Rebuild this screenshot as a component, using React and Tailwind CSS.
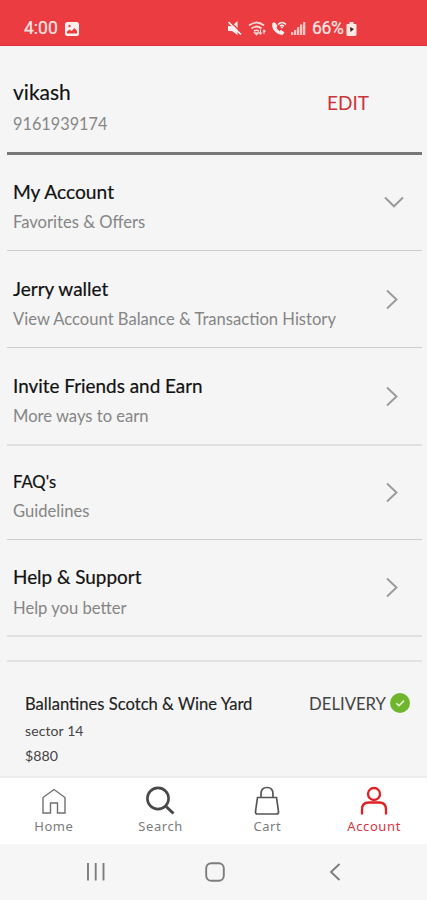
const rows = [
  { title: "My Account", sub: "Favorites & Offers", down: true, box: "h-[96px] pt-[25px] border-b border-[#cccccc]", gap: "mt-[6px]", titleSize: "text-[19.2px]", icon: "mt-[10px] mr-[18px]" },
  { title: "Jerry wallet", sub: "View Account Balance & Transaction History", box: "h-[97px] pt-[26px] border-b border-[#cccccc]", gap: "mt-[6px]", titleSize: "text-[19px]", icon: "mt-[11px] mr-[24px]" },
  { title: "Invite Friends and Earn", sub: "More ways to earn", box: "h-[98px] pt-[26px] border-b-2 border-[#e0e0e0]", gap: "mt-[6px]", titleSize: "text-[18.9px]", icon: "mt-[11px] mr-[24px]" },
  { title: "FAQ's", sub: "Guidelines", box: "h-[94px] pt-[24px] border-b border-[#cccccc]", gap: "mt-[5px]", titleSize: "text-[16.6px]", icon: "mt-[11px] mr-[24px]" },
  { title: "Help & Support", sub: "Help you better", box: "h-[97px] pt-[25px] border-b-2 border-[#e0e0e0]", gap: "mt-[7px]", titleSize: "text-[18.9px]", icon: "mt-[11px] mr-[24px]" },
];

function Chevron({ down, className }) {
  return down ? (
    <svg className={className} width="20" height="24" viewBox="0 0 20 24" fill="none" stroke="#9a9a9a" strokeWidth="1.9">
      <path d="M1 7.5L10 16.3L19 7.5" />
    </svg>
  ) : (
    <svg className={className} width="12" height="24" viewBox="0 0 12 24" fill="none" stroke="#9a9a9a" strokeWidth="1.9">
      <path d="M1 2.5L10.5 11.5L1 20.5" />
    </svg>
  );
}

function StatusBar() {
  return (
    <header className="flex h-[46px] shrink-0 items-start border-b border-[#dd3040] bg-[#eb3c42] pt-[18px] pl-[24px] font-['Roboto',sans-serif] text-[17.5px] leading-[21px] text-[#ffe8e4]">
      <span className="w-[34px] whitespace-nowrap [-webkit-text-stroke:0.2px_#ffe8e4]">4:00</span>
      <svg className="mt-[4px] ml-[7px]" width="14" height="14" viewBox="0 0 14 14">
        <rect width="14" height="14" rx="2.5" fill="#fff0ed" />
        <path d="M2 11.5V9.5L4.5 7.5L6.5 9L9.5 6L12 9V11.5Z" fill="#eb3c42" />
        <circle cx="4.5" cy="4" r="1.2" fill="#eb3c42" />
      </svg>
      <svg className="mt-[3px] ml-[149px]" width="14" height="15" viewBox="0 0 14 15" fill="#fff0ed">
        <path d="M0 5H4L9.5 0V14L4 10H0Z" />
        <path d="M1.5 0L14 12" stroke="#eb3c42" strokeWidth="1.4" />
        <path d="M.5 1L13 13.5" stroke="#fff0ed" strokeWidth="1.6" />
      </svg>
      <svg className="mt-[3px] ml-[6px]" width="19" height="15" viewBox="0 0 19 15" fill="none" stroke="#ffd9d5" strokeWidth="1.7">
        <path d="M1 4.5Q8.5 -1.5 16 4.5M3.5 7.5Q8.5 3.5 13.5 7.5M6 10.2Q8.5 8.3 11 10.2" />
        <path d="M7 12L8.5 13.5L10 12Z" fill="#ffd9d5" />
        <path d="M12.5 8.5V13M11 11.5L12.5 13.2L14 11.5M16 13V9M14.8 10.5L16 9L17.5 10.5" strokeWidth="1.1" />
      </svg>
      <svg className="mt-[3px] ml-[4px]" width="16" height="15" viewBox="0 0 16 15" fill="none" stroke="#fff0ed">
        <path d="M2 2C.5 8 5 13 11.5 13.5L13 11.5L10 9.5L8.5 10.5Q6 9 5 6.5L6 5L4 2Z" fill="#fff0ed" />
        <path d="M7 3.5Q11 -.5 15 3.5M9 5.3Q11 3.3 13 5.3" strokeWidth="1.4" />
        <circle cx="11" cy="6.4" r=".6" fill="#fff0ed" />
      </svg>
      <svg className="mt-[3px] ml-[4px]" width="15" height="15" viewBox="0 0 15 15" fill="#ffc5c1">
        <path d="M0 11H2.3V14H0ZM3 9H5.3V14H3ZM6 6H8.3V14H6ZM9 3.5H11.3V14H9ZM12 1H14.3V14H12Z" />
      </svg>
      <span className="ml-[6px] w-[34px] whitespace-nowrap tracking-[-0.3px] [-webkit-text-stroke:0.2px_#ffe8e4]">66%</span>
      <svg className="mt-[4px]" width="11" height="14" viewBox="0 0 11 14">
        <path d="M3.5 0H7.5V2H9.5Q10.5 2 10.5 3V12.5Q10.5 14 9 14H2Q.5 14 .5 12.5V3Q.5 2 1.5 2H3.5Z" fill="#ffe9e2" />
        <path d="M4 5L8 7L4.5 10Z" fill="#3a2828" />
      </svg>
    </header>
  );
}

function NavItem({ label, active, children }) {
  return (
    <div className={"flex flex-1 flex-col items-center " + (active ? "text-[#d9343f]" : "text-[#7c7c7c]")}>
      <div className="mt-[7px] flex h-[32px] items-center">{children}</div>
      <span className="mt-[1px] whitespace-nowrap pl-[1px] font-['Noto_Sans',sans-serif] text-[13px] leading-[16px] tracking-[0.6px]">{label}</span>
    </div>
  );
}

export default function App() {
  return (
    <div className="flex h-[900px] w-[427px] flex-col overflow-hidden bg-[#f5f5f5] font-['Lato',sans-serif]">
      <StatusBar />
      <section className="mr-[5px] ml-[7px] flex h-[109px] shrink-0 justify-between border-b-[3px] border-[#777777] pl-[6px]">
        <div className="flex flex-col pt-[34px] whitespace-nowrap">
          <h1 className="text-[21px] leading-[24px] text-[#111111] [-webkit-text-stroke:0.15px_#111111]">vikash</h1>
          <p className="mt-[9px] text-[16.3px] leading-[22px] text-[#878787]">9161939174</p>
        </div>
        <button className="mt-[45px] mr-[53px] h-[24px] text-[19px] leading-[24px] text-[#cc343b]">EDIT</button>
      </section>
      <main className="mr-[5px] ml-[7px] flex flex-col">
        {rows.map((r) => (
          <div key={r.title} className={"flex shrink-0 justify-between pl-[6px] " + r.box}>
            <div className="flex flex-col whitespace-nowrap">
              <h2 className={"leading-[24px] text-[#111111] [-webkit-text-stroke:0.2px_#111111] " + r.titleSize}>{r.title}</h2>
              <p className={"text-[16.6px] leading-[24px] text-[#858585] " + r.gap}>{r.sub}</p>
            </div>
            <Chevron down={r.down} className={r.icon} />
          </div>
        ))}
        <div className="h-[25px] shrink-0 border-b-2 border-[#e2e2e2]" />
        <section className="flex h-[114px] shrink-0 justify-between pt-[31px] pr-[12px] pl-[18px]">
          <div className="flex flex-col whitespace-nowrap text-[#444444]">
            <h3 className="text-[16.6px] leading-[22px] text-[#222222] [-webkit-text-stroke:0.15px_#222222]">Ballantines Scotch & Wine Yard</h3>
            <p className="mt-[6px] text-[14px] leading-[20px] tracking-[0.1px]">sector 14</p>
            <p className="mt-[5px] text-[14.2px] leading-[20px]">$880</p>
          </div>
          <div className="flex h-[22px] items-center">
            <span className="text-[16.7px] leading-[22px] text-[#444444]">DELIVERY</span>
            <svg className="-mt-[2px] ml-[4px]" width="20" height="20" viewBox="0 0 20 20">
              <circle cx="10" cy="10" r="10" fill="#6fb62c" />
              <path d="M6.2 10.2L9 12.7L14 7.6" fill="none" stroke="#e8f6d9" strokeWidth="1.5" />
            </svg>
          </div>
        </section>
      </main>
      <nav className="flex h-[68px] shrink-0 border-t-2 border-[#ececec] bg-white">
        <NavItem label="Home">
          <svg className="ml-[1px]" width="24" height="26" viewBox="0 0 24 26" fill="none" stroke="#707070" strokeWidth="1.4">
            <path d="M1 25V9.5L12 1.5L23 9.5V25H15.5V15H8.5V25Z" />
          </svg>
        </NavItem>
        <NavItem label="Search">
          <svg width="29" height="30" viewBox="0 0 29 30" fill="none" stroke="#484848">
            <circle cx="12" cy="12.5" r="10.6" strokeWidth="2.6" />
            <path d="M19.5 20L27.5 27.5" strokeWidth="3" />
          </svg>
        </NavItem>
        <NavItem label="Cart">
          <svg width="26" height="30" viewBox="0 0 26 30" fill="none" stroke="#555555" strokeWidth="1.7">
            <path d="M3.5 11.5H22.5L24.5 25.5Q24.8 28 22.5 28H3.5Q1.2 28 1.5 25.5Z" />
            <path d="M7 11.5V8Q7 1.5 13 1.5Q19 1.5 19 8V11.5" />
          </svg>
        </NavItem>
        <NavItem label="Account" active>
          <svg width="28" height="30" viewBox="0 0 28 30" fill="none" stroke="#df1f24" strokeWidth="2.3">
            <circle cx="14" cy="8" r="6" />
            <path d="M2 28.5V23.5Q2 16.5 9 16.5H19Q26 16.5 26 23.5V28.5" />
          </svg>
        </NavItem>
      </nav>
      <footer className="flex h-[56px] shrink-0 bg-[#f6f6f6] pt-[18px] pl-[86px]">
        <svg width="20" height="20" viewBox="0 0 20 20" stroke="#7d7d7d" strokeWidth="1.9">
          <path d="M2 1V18.5M9.7 1V18.5M17.5 1V18.5" />
        </svg>
        <svg className="ml-[99px]" width="20" height="20" viewBox="0 0 20 20" fill="none" stroke="#7d7d7d" strokeWidth="1.9">
          <rect x="1.2" y="1.2" width="17.6" height="17.6" rx="5" />
        </svg>
        <svg className="ml-[104px]" width="12" height="20" viewBox="0 0 12 20" fill="none" stroke="#7d7d7d" strokeWidth="1.9">
          <path d="M10.5 2L2 10L10.5 18" />
        </svg>
      </footer>
    </div>
  );
}
